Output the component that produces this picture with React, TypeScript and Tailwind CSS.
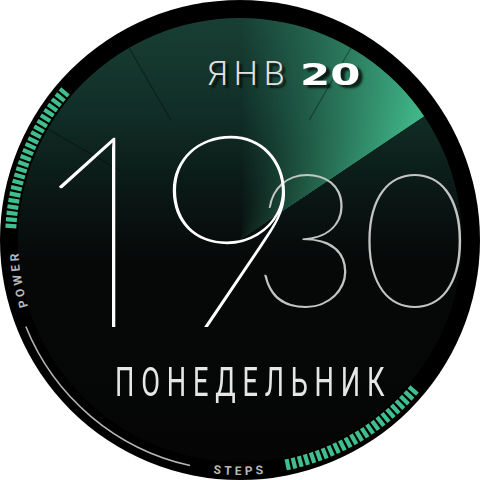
import React from "react";

const C = 240;
const pt = (r: number, deg: number): [number, number] => {
  const a = (deg * Math.PI) / 180;
  return [C + r * Math.sin(a), C - r * Math.cos(a)];
};
const arc = (r: number, a1: number, a2: number, sweep: 0 | 1) => {
  const [x1, y1] = pt(r, a1);
  const [x2, y2] = pt(r, a2);
  return `M ${x1} ${y1} A ${r} ${r} 0 0 ${sweep} ${x2} ${y2}`;
};

function Ticks({ start, end, n }: { start: number; end: number; n: number }) {
  const items = [];
  for (let i = 0; i < n; i++) {
    const d = start + ((end - start) * i) / (n - 1);
    const [x1, y1] = pt(224, d);
    const [x2, y2] = pt(235, d);
    items.push(
      <line key={i} x1={x1} y1={y1} x2={x2} y2={y2} stroke="#3fbf8f" strokeWidth={4.2} />
    );
  }
  return <g>{items}</g>;
}

function HourLines() {
  return (
    <g>
      {[300, 330, 30].map((d) => {
        const [x1, y1] = pt(138, d);
        const [x2, y2] = pt(222, d);
        return (
          <line key={d} x1={x1} y1={y1} x2={x2} y2={y2} stroke="rgba(0,0,0,0.33)" strokeWidth={1.3} />
        );
      })}
    </g>
  );
}

export default function App() {
  return (
    <div className="flex h-[480px] w-[480px] bg-white">
      <div className="relative h-[480px] w-[480px] overflow-hidden rounded-full bg-black">
        <svg className="absolute inset-0" width="480" height="480" viewBox="0 0 480 480">
          <defs>
            <linearGradient id="face" x1="0" y1="0" x2="0" y2="1">
              <stop offset="0" stopColor="#183f34" />
              <stop offset="0.2" stopColor="#112f28" />
              <stop offset="0.4" stopColor="#0a1714" />
              <stop offset="0.55" stopColor="#060808" />
              <stop offset="1" stopColor="#050505" />
            </linearGradient>
          </defs>
          <circle cx="240" cy="240" r="222" fill="url(#face)" />
        </svg>

        <div className="absolute inset-[18px] rounded-full bg-[conic-gradient(from_0deg,rgba(64,186,140,0)_0deg,rgba(64,186,140,0.38)_22deg,rgba(68,192,144,0.97)_56deg,transparent_56.2deg)] [mask-image:radial-gradient(closest-side,rgba(0,0,0,0.1),rgba(0,0,0,0.5)_45%,#000_100%)]" />

        <svg className="absolute inset-0" width="480" height="480" viewBox="0 0 480 480">
          <defs>
            <path id="powerPath" d={arc(222, 230, 290, 1)} />
            <path id="stepsPath" d={arc(235, 210, 150, 0)} />
          </defs>
          <HourLines />
          <Ticks start={273.5} end={310} n={24} />
          <Ticks start={131} end={168} n={24} />
          <path d={arc(231, 192.5, 248, 1)} fill="none" stroke="#b5b5b5" strokeWidth={1.6} />
          <text
            fill="#b8b8b8"
            fontSize="12"
            fontWeight="700"
            letterSpacing="3.3"
            style={{ fontFamily: "Roboto, sans-serif" }}
            textAnchor="middle"
          >
            <textPath href="#powerPath" startOffset="50%">
              POWER
            </textPath>
          </text>
          <text
            fill="#b8b8b8"
            fontSize="12"
            fontWeight="700"
            letterSpacing="3.4"
            style={{ fontFamily: "Roboto, sans-serif" }}
            textAnchor="middle"
          >
            <textPath href="#stepsPath" startOffset="50%">
              STEPS
            </textPath>
          </text>
        </svg>

        <div className="relative flex h-full flex-col">
          <div className="ml-[207px] mt-[56px] flex items-baseline">
            <span className="text-[34px] font-light leading-none tracking-[6px] text-[#e2e2e2] [font-family:Roboto,sans-serif] [text-shadow:3px_3px_2px_rgba(0,0,0,0.75)]">
              ЯНВ
            </span>
            <span className="ml-[9px] origin-left scale-x-[1.4] text-[31px] font-bold leading-none text-white [font-family:'DejaVu_Sans',sans-serif] [text-shadow:3px_3px_2px_rgba(0,0,0,0.75)]">
              20
            </span>
          </div>

          <div className="mt-[-2px] grid h-[270px]">
            <span className="col-start-1 row-start-1 ml-[252px] mt-[53px] self-start text-[187px] font-thin leading-none text-[#c4c4c4] [font-family:Lato,sans-serif]">
              30
            </span>
            <span className="col-start-1 row-start-1 ml-[26px] h-[239px] self-start justify-self-start overflow-hidden">
              <span className="block text-[276px] font-thin leading-none text-white [font-family:Lato,sans-serif]">
                1
              </span>
            </span>
            <span className="col-start-1 row-start-1 ml-[152px] self-start justify-self-start text-[270px] font-thin leading-none text-white [font-family:Lato,sans-serif]">
              9
            </span>
          </div>

          <div className="ml-[115px] mt-[5px] origin-left scale-x-[0.68] whitespace-nowrap text-[40px] font-normal leading-none tracking-[10px] text-[#e6e6e6] [font-family:Roboto,sans-serif]">
            ПОНЕДЕЛЬНИК
          </div>
        </div>
      </div>
    </div>
  );
}
